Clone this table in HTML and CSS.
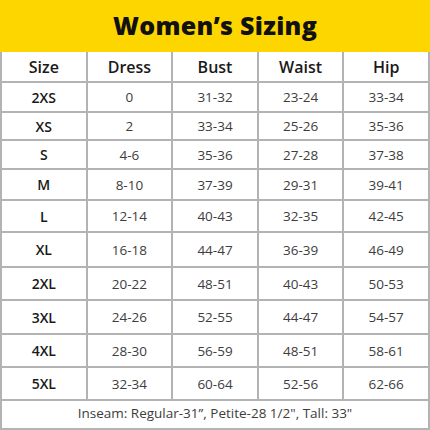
FILE: index.html
```html
<!DOCTYPE html>
<html>
<head>
<meta charset="utf-8">
<link rel="stylesheet" href="styles.css">
</head>
<body>
<div class="chart">
  <div class="title">Women’s Sizing</div>
  <div class="grid">
    <div class="cell head">Size</div><div class="cell head">Dress</div><div class="cell head">Bust</div><div class="cell head">Waist</div><div class="cell head">Hip</div>
    <div class="cell size">2XS</div><div class="cell">0</div><div class="cell">31-32</div><div class="cell">23-24</div><div class="cell">33-34</div>
    <div class="cell size">XS</div><div class="cell">2</div><div class="cell">33-34</div><div class="cell">25-26</div><div class="cell">35-36</div>
    <div class="cell size">S</div><div class="cell">4-6</div><div class="cell">35-36</div><div class="cell">27-28</div><div class="cell">37-38</div>
    <div class="cell size">M</div><div class="cell">8-10</div><div class="cell">37-39</div><div class="cell">29-31</div><div class="cell">39-41</div>
    <div class="cell size">L</div><div class="cell">12-14</div><div class="cell">40-43</div><div class="cell">32-35</div><div class="cell">42-45</div>
    <div class="cell size">XL</div><div class="cell">16-18</div><div class="cell">44-47</div><div class="cell">36-39</div><div class="cell">46-49</div>
    <div class="cell size">2XL</div><div class="cell">20-22</div><div class="cell">48-51</div><div class="cell">40-43</div><div class="cell">50-53</div>
    <div class="cell size">3XL</div><div class="cell">24-26</div><div class="cell">52-55</div><div class="cell">44-47</div><div class="cell">54-57</div>
    <div class="cell size">4XL</div><div class="cell">28-30</div><div class="cell">56-59</div><div class="cell">48-51</div><div class="cell">58-61</div>
    <div class="cell size">5XL</div><div class="cell">32-34</div><div class="cell">60-64</div><div class="cell">52-56</div><div class="cell">62-66</div>
    <div class="cell foot">Inseam: Regular-31”, Petite-28 1/2", Tall: 33"</div>
  </div>
</div>
</body>
</html>
```
FILE: styles.css
```css
html, body {
  margin: 0;
  padding: 0;
  background: #ffffff;
}
.chart {
  width: 430px;
  height: 430px;
  display: flex;
  flex-direction: column;
  font-family: "Open Sans", Lato, sans-serif;
}
.title {
  height: 52px;
  background: #fdd600;
  color: #111111;
  font-weight: 800;
  font-size: 25px;
  letter-spacing: 0.3px;
  display: flex;
  align-items: center;
  justify-content: center;
  padding-bottom: 2px;
  box-sizing: border-box;
}
.grid {
  flex: 1;
  display: grid;
  grid-template-columns: repeat(5, 1fr);
  grid-template-rows: 29px 28px 26px 27px 29px 30px 33px 31px 32px 31px 31px 27px;
  gap: 2px;
  padding: 0 2px 2px 2px;
  background: #b3b3b3;
}
.cell {
  background: #ffffff;
  display: flex;
  align-items: center;
  justify-content: center;
  font-size: 13.5px;
  color: #3d3d3d;
}
.head {
  font-size: 16px;
  font-weight: 600;
  color: #1a1a1a;
}
.size {
  font-weight: 600;
  font-size: 14px;
  color: #1a1a1a;
}
.foot {
  grid-column: 1 / -1;
  font-size: 13.5px;
  color: #3d3d3d;
  padding-bottom: 4px;
}
```
